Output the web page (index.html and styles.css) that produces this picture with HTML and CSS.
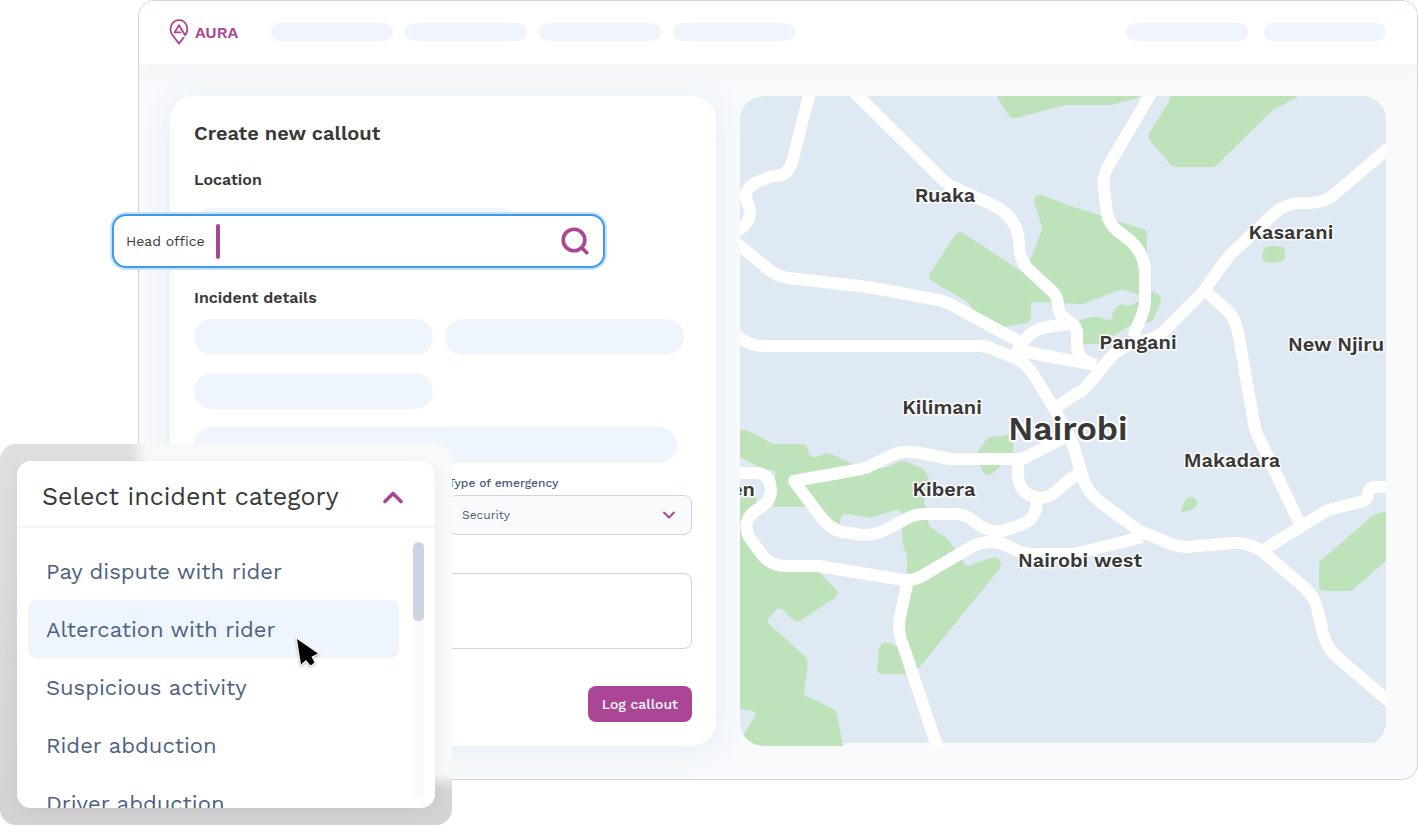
FILE: index.html
```html
<!DOCTYPE html>
<html lang="en">
<head>
    <meta charset="UTF-8">
    <meta name="viewport" content="width=device-width, initial-scale=1.0">
    <title>AURA - Create new callout</title>
    <link rel="stylesheet" href="styles.css">
</head>
<body>
<div class="app">
    <header class="topbar">
        <a class="logo" href="#">
            <svg width="20" height="26" viewBox="0 0 20 26" fill="none" stroke="currentColor" stroke-width="1.8" stroke-linecap="round" stroke-linejoin="round">
                <path d="M14.6 18.6 L10 24.6 L3.2 15.8 C-0.8 9.6 3 1.2 10 1.2 C17 1.2 20.8 9.6 16.2 16.2 L10 6.2 L5.6 13.4 H11.6"/>
            </svg>
            <span>AURA</span>
        </a>
        <div class="nav-left">
            <span class="skeleton nav-item"></span>
            <span class="skeleton nav-item"></span>
            <span class="skeleton nav-item"></span>
            <span class="skeleton nav-item"></span>
        </div>
        <div class="nav-right">
            <span class="skeleton nav-item"></span>
            <span class="skeleton nav-item"></span>
        </div>
    </header>

    <main class="content">
        <form class="callout">
            <h1>Create new callout</h1>
            <h2>Location</h2>
            <div class="skeleton bar location-bar"></div>
            <h2 class="details-title">Incident details</h2>
            <div class="bars">
                <div class="skeleton bar"></div>
                <div class="skeleton bar"></div>
                <div class="skeleton bar"></div>
                <div class="skeleton bar wide"></div>
            </div>
            <div class="emergency">
                <label for="emergency">Type of emergency</label>
                <div class="select-wrap">
                    <select id="emergency">
                        <option>Security</option>
                    </select>
                    <svg class="chevron" width="14" height="8" viewBox="0 0 14 8" fill="none" stroke="currentColor" stroke-width="2" stroke-linecap="round" stroke-linejoin="round">
                        <path d="M2 1.5 L7 6.5 L12 1.5"/>
                    </svg>
                </div>
            </div>
            <textarea class="notes" aria-label="Notes"></textarea>
            <button type="button" class="log-btn">Log callout</button>
        </form>

        <svg class="map" viewBox="740 96 646 650" preserveAspectRatio="xMidYMid slice" role="img" aria-label="Map of Nairobi">
            <rect class="land" x="740" y="96" width="646" height="647"/>
            <g class="parks">
                <path d="M999 96 L1010 114 Q1012 117 1016 116 L1065 103 H1110 L1137 96 V90 H996 Z"/>
                <path d="M1172 90 V97 Q1173 100 1171 102 L1151 134 Q1150 137 1152 140 L1172 163 Q1174 165 1176 165 H1212 Q1214 165 1216 163 L1268 112 Q1270 110 1273 108 L1300 93 V90 Z"/>
                <path d="M956 237 L932 274 Q930 278 934 280 L968 300 Q971 302 976 311 L1003 325 L1026 321 Q1029 320 1029 316 V304 Q1029 300 1034 300 L1083 302 L1119 288 Q1122 287 1125 288 L1140 294 L1145 260 V235 Q1145 232 1142 231 L1117 223 L1070 208 L1042 197 Q1036 196 1036 201 L1044 227 Q1044 230 1043 233 L1032 261 L1024 273 Q1020 274 1017 271 L964 236 Q960 232 956 237 Z"/>
                <path d="M1150 294 Q1152 293 1155 295 Q1160 298 1159 301 L1152 318 Q1150 321 1146 321 L1130 323 L1100 342 H1084 L1081 322 Q1092 318 1100 319 Q1108 325 1114 319 Q1114 309 1122 306 Q1130 310 1139 303 Z"/>
                <path d="M1270 248 H1279 Q1283 248 1283 252 V256 Q1283 260 1278 260 L1268 261 Q1264 260 1264 256 Q1265 248 1270 248 Z"/>
                <path d="M1390 513 L1379 515 Q1376 516 1373 518 L1321 563 V586 Q1321 589 1325 589 H1349 Q1351 589 1354 586 L1390 555 Z"/>
                <path d="M1183 510 L1187 501 C1190 497 1196 500 1195 504 C1194 508 1189 508 1183 510 Z"/>
                <path d="M987 442 Q989 439 992 439 L1006 437 Q1011 437 1011 442 V453 L991 472 Q988 475 985 471 L979 460 Q977 456 979 453 Z"/>
                <path d="M736 432 H741 Q744 431 748 433 L773 446 H801 Q806 446 806 451 Q807 460 816 459 L826 455 Q828 455 831 456 L853 466 L880 470 Q883 471 887 469 L899 464 Q902 462 905 463 L921 470 Q925 472 926 478 L928 484 L922 500 Q921 504 924 508 L926 522 Q927 527 931 530 L943 538 Q946 540 948 543 L957 555 L964 566 Q967 569 972 567 L991 560 Q998 557 999 565 Q999 567 997 569 L918 666 L907 672 H882 Q879 672 879 668 L881 649 Q883 643 889 645 L898 650 L909 573 V557 L904 540 V515 Q904 508 895 508 L873 515 Q870 516 866 515 L845 512 Q839 512 838 523 L807 505 H775 Q771 500 776 480 Q780 469 771 468 H765 L736 453 Z"/>
                <path d="M736 500 L755 499 L745 540 L767 569 L818 574 L834 590 Q837 593 834 596 L801 618 Q797 621 794 618 L784 608 Q779 605 775 608 L767 617 Q763 622 768 626 L803 657 Q806 660 806 663 L802 692 Q802 696 806 698 L831 710 Q834 712 835 715 L842 750 H736 V742 L744 738 L757 716 Q759 711 753 709 L736 706 Z"/>
            </g>
            <g class="roads">
                <path d="M811 88 L792 162 Q788 176 775 176 Q770 176 765 179 L755 183 Q743 190 747 202 Q753 214 747 222 Q744 227 736 231"/>
                <path d="M850 88 L944 181 Q948 185 953 187 L993 205 Q1018 217 1019 243 Q1019 260 1029 270 L1053 292 Q1058 297 1058 305 Q1058 315 1067 320 Q1079 327 1077 338 V347 Q1079 360 1092 364"/>
                <path d="M734 241 L767 268 Q776 276 788 278 L868 287 L938 300 Q944 301 950 304 L1020 342"/>
                <path d="M730 333 L740 338 Q751 346 763 346 H980 Q988 346 995 350 L1017 359 Q1026 363 1035 377 L1055 410 L1067 432 Q1073 442 1076 455 L1082 475 Q1086 491 1100 502 L1138 530 L1171 544 Q1178 547 1187 547 L1233 543 Q1250 542 1263 552 L1305 588 Q1315 597 1318 612 L1323 633 Q1326 647 1337 657 L1392 704"/>
                <path d="M1016 354 Q1027 330 1047 327 L1070 324"/>
                <path d="M1016 350 L1052 357 L1096 365"/>
                <path d="M1153 90 L1110 163 Q1102 175 1104 190 L1107 213 Q1109 226 1123 235 Q1145 250 1145 273 V300 Q1145 307 1142 315 L1133 337"/>
                <path d="M1392 145 L1337 192 Q1326 203 1310 203 H1298 Q1285 204 1275 213 L1233 252 Q1229 255 1226 260 L1202 293 L1163 332 Q1156 339 1143 341 Q1123 344 1110 358 L1087 386 Q1083 391 1076 394 L1055 408"/>
                <path d="M1205 291 L1227 310 Q1235 318 1238 332 L1254 423 Q1256 434 1260 440 L1300 524"/>
                <path d="M1260 552 L1323 513 Q1327 510 1332 509 L1360 502 Q1369 500 1368 493 Q1369 487 1375 487 H1392"/>
                <path d="M1070 435 L1030 455 Q1025 459 1018 459 H950 L920 453 Q903 450 892 455 L868 467 Q863 469 856 470 L794 481 L818 513 Q830 530 843 532 L863 535 Q877 535 885 530 L910 517 Q917 514 923 514 H955 Q965 514 972 520 Q987 533 1003 531 L1023 524 Q1037 518 1037 500"/>
                <path d="M1018 460 V477 Q1020 496 1040 498 Q1050 498 1060 488 Q1063 484 1080 472"/>
                <path d="M734 473 H757 Q770 474 771 490 Q771 502 758 509 Q741 519 749 537 L763 556 Q772 566 785 566 H818 L897 579 Q913 583 927 573 L973 546 Q990 538 1008 546 Q1020 553 1030 554 H1075 L1142 537"/>
                <path d="M908 580 L900 617 Q897 632 903 645 L939 752"/>
            </g>
            <g class="labels">
                <text x="945" y="202">Ruaka</text>
                <text x="1291" y="239">Kasarani</text>
                <text x="1138" y="349">Pangani</text>
                <text x="1336" y="351">New Njiru</text>
                <text x="942" y="414">Kilimani</text>
                <text class="city" x="1068" y="440">Nairobi</text>
                <text x="1232" y="467">Makadara</text>
                <text x="944" y="496">Kibera</text>
                <text class="edge" x="755" y="496">Karen</text>
                <text x="1080" y="567">Nairobi west</text>
            </g>
        </svg>
    </main>
</div>

<div class="search">
    <input type="text" value="Head office" aria-label="Location">
    <span class="caret"></span>
    <button type="button" aria-label="Search">
        <svg width="30" height="30" viewBox="0 0 30 30" fill="none" stroke="currentColor" stroke-width="3.6" stroke-linecap="round">
            <circle cx="14" cy="14" r="10.8"/>
            <path d="M22 22 L26.8 26.8"/>
        </svg>
    </button>
</div>

<section class="popup">
    <div class="category">
        <button type="button" class="category-head">
            <span>Select incident category</span>
            <svg width="22" height="14" viewBox="0 0 22 14" fill="none" stroke="currentColor" stroke-width="3.6" stroke-linecap="round" stroke-linejoin="round">
                <path d="M3 11.5 L11 3.5 L19 11.5"/>
            </svg>
        </button>
        <div class="category-body">
            <ul>
                <li><button type="button">Pay dispute with rider</button></li>
                <li><button type="button" class="active">Altercation with rider</button></li>
                <li><button type="button">Suspicious activity</button></li>
                <li><button type="button">Rider abduction</button></li>
                <li><button type="button">Driver abduction</button></li>
            </ul>
            <div class="track"><div class="thumb"></div></div>
        </div>
    </div>
    <svg class="cursor" width="30" height="34" viewBox="0 0 30 34">
        <path d="M5 3 L9 28.5 L14 24 L18.5 29.5 L22.5 26.5 L19.5 20.8 L26 17.5 Z"/>
    </svg>
</section>
</body>
</html>
```
FILE: styles.css
```css
* {
    box-sizing: border-box;
}

body {
    margin: 0;
    position: relative;
    min-height: 826px;
    background-color: #fff;
    font-family: "Work Sans", Inter, "Liberation Sans", sans-serif;
    color: #383838;
}

button, input, select, textarea {
    font-family: inherit;
}

.app {
    margin-left: 138px;
    border: 1px solid #cbd5e1;
    border-radius: 16px;
    background-color: #f8fafc;
    overflow: hidden;
}

/* Top bar */
.topbar {
    display: flex;
    align-items: center;
    height: 63px;
    padding: 0 31px 1px 30px;
    background-color: #fff;
    box-shadow: 0 4px 32px rgba(0, 0, 0, 0.04);
}

.logo {
    display: flex;
    align-items: center;
    gap: 6px;
    margin-right: 33px;
    color: #ab4697;
    font-size: 16px;
    font-weight: 600;
    text-decoration: none;
}

.nav-left, .nav-right {
    display: flex;
    gap: 12px;
}

.nav-right {
    gap: 16px;
    margin-left: auto;
}

.skeleton {
    background-color: #eef5fd;
    border-radius: 18px;
}

.nav-item {
    width: 122px;
    height: 18px;
}

/* Page content */
.content {
    display: grid;
    grid-template-columns: 546fr 646fr;
    gap: 24px;
    padding: 32px 31px 33px;
}

.callout {
    display: flex;
    flex-direction: column;
    padding: 24px;
    background-color: #fff;
    border-radius: 24px;
    box-shadow: 0 4px 32px #e2ecf5;
}

h1 {
    margin: 0 0 24px;
    font-size: 20px;
    line-height: 26px;
    font-weight: 600;
}

h2 {
    margin: 0 0 18px;
    font-size: 16px;
    line-height: 20px;
    font-weight: 600;
}

.bar {
    width: 48%;
    height: 36px;
}

.location-bar {
    width: 65%;
}

.details-title {
    margin: 44px 0 11px;
}

.bars {
    display: flex;
    flex-wrap: wrap;
    gap: 18px 12px;
}

.bars .wide {
    width: 97%;
}

.emergency {
    width: 49%;
    margin: 12px 0 38px auto;
}

.emergency label {
    display: block;
    margin-bottom: 4px;
    font-size: 12px;
    line-height: 16px;
    font-weight: 500;
    color: #475b78;
}

.select-wrap {
    position: relative;
}

.select-wrap select {
    display: block;
    width: 100%;
    height: 40px;
    padding: 0 13px;
    appearance: none;
    background-color: #f8fafc;
    border: 1px solid #cbd5e1;
    border-radius: 8px;
    font-size: 12px;
    color: #475b78;
}

.chevron {
    position: absolute;
    top: 16px;
    right: 16px;
    color: #ab4697;
    pointer-events: none;
}

.notes {
    height: 76px;
    border: 1px solid #cbd5e1;
    border-radius: 8px;
    resize: none;
}

.log-btn {
    align-self: flex-end;
    height: 36px;
    margin-top: 37px;
    padding: 0 14px;
    border: none;
    border-radius: 8px;
    background-color: #ab4697;
    color: #fff;
    font-size: 14px;
    font-weight: 500;
}

/* Map */
.map {
    display: block;
    width: 100%;
    border-radius: 24px;
}

.land {
    fill: #dfe9f4;
}

.parks path {
    fill: #bee3bb;
    stroke: #bee3bb;
    stroke-width: 4;
    stroke-linejoin: round;
}

.roads path {
    fill: none;
    stroke: #fff;
    stroke-width: 12;
    stroke-linejoin: round;
}

.labels text {
    fill: #383838;
    stroke: #fff;
    stroke-width: 3;
    stroke-linejoin: round;
    paint-order: stroke;
    font-size: 20px;
    font-weight: 600;
    text-anchor: middle;
}

.labels .city {
    font-size: 34px;
    stroke-width: 4;
}

.labels .edge {
    text-anchor: end;
}

/* Focused search box, lies over the form */
.search {
    position: absolute;
    top: 214px;
    left: 112px;
    display: flex;
    align-items: center;
    width: 493px;
    height: 54px;
    padding: 0 13px 0 12px;
    background-color: #fff;
    border: 2px solid #4299ec;
    border-radius: 14px;
    box-shadow: 0 0 0 2px #c8e2fb;
}

.search input {
    width: 90px;
    padding: 0;
    border: none;
    outline: none;
    font-size: 14px;
    color: #383838;
}

.caret {
    width: 4px;
    height: 35px;
    border-radius: 2px;
    background-color: #ab4697;
}

.search button {
    margin-left: auto;
    padding: 0;
    border: none;
    background: none;
    color: #ab4697;
    line-height: 0;
}

/* Category popup */
.popup {
    position: absolute;
    top: 444px;
    left: 0;
    width: 452px;
    padding: 17px;
    border-radius: 16px;
    background: linear-gradient(#dfdfdf, #d3d3d3);
    overflow: hidden;
}

.popup::before {
    content: "";
    position: absolute;
    top: -20px;
    left: 138px;
    right: -20px;
    bottom: 44px;
    background-color: #f8f9fa;
    filter: blur(6px);
}

.category {
    position: relative;
    height: 347px;
    background-color: #fff;
    border-radius: 14px;
    box-shadow: 0 4px 16px rgba(0, 0, 0, 0.06);
    overflow: hidden;
}

.category-head {
    display: flex;
    align-items: center;
    justify-content: space-between;
    width: 100%;
    height: 67px;
    padding: 6px 31px 0 25px;
    border: none;
    border-bottom: 2px solid #eef5fd;
    background: none;
    font-size: 25px;
    color: #383838;
}

.category-head svg {
    color: #ab4697;
}

.category-body {
    display: flex;
    gap: 14px;
    padding: 14px 11px 11px;
}

.category ul {
    flex: 1;
    margin: 0;
    padding: 0;
    list-style: none;
}

.category li button {
    width: 100%;
    height: 58px;
    padding: 0 18px;
    border: none;
    border-radius: 8px;
    background: none;
    font-size: 22px;
    text-align: left;
    color: #4c6180;
}

.category li .active {
    background-color: #eef5fd;
}

.track {
    width: 11px;
    height: 255px;
    background-color: #f8fafc;
    border-radius: 6px;
}

.thumb {
    height: 79px;
    background-color: #cbd5e1;
    border-radius: 6px;
}

.cursor {
    position: absolute;
    top: 192px;
    left: 292px;
    fill: #000;
    stroke: #fff;
    stroke-width: 2;
    paint-order: stroke;
    filter: drop-shadow(0 1px 1px rgba(0, 0, 0, 0.3));
}
```
